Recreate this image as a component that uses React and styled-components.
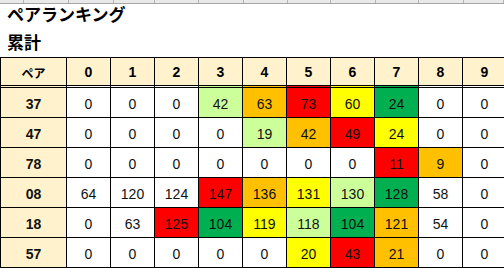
import React from "react";
import styled, { createGlobalStyle } from "styled-components";

const Global = createGlobalStyle`
  html, body { margin: 0; padding: 0; background: #fff; overflow: hidden; }
  body { font-family: "Liberation Sans", Arial, sans-serif; color: #000; }
`;

const Page = styled.div`
  display: flex;
  flex-direction: column;
  width: 504px;
  height: 268px;
  overflow: hidden;
`;

const ColStrip = styled.div`
  display: flex;
  height: 3px;
  background: #e9e9e9;
  border-bottom: 1px solid #a6a6a6;
`;

const StripCell = styled.div`
  flex: 0 0 ${(p) => p.$w}px;
  box-sizing: border-box;
  border-right: 1px solid #b4b4b4;
`;

const Title = styled.div`
  padding-left: 7px;
  font-family: "Noto Sans CJK JP", sans-serif;
  font-weight: 700;
  font-size: 17px;
  line-height: 19px;
  height: 19px;
  white-space: nowrap;
`;

const Sub = styled(Title)`
  margin-top: 9px;
`;

const Grid = styled.div`
  margin-top: 6px;
  display: grid;
  grid-template-columns: 66px repeat(10, 44px);
  width: max-content;
  border-top: 1px solid #000;
  border-left: 1px solid #000;
`;

const Head = styled.div`
  box-sizing: border-box;
  height: 28px;
  background: #fff2cc;
  border-right: 1px solid #000;
  border-bottom: 1px solid #000;
  display: flex;
  align-items: center;
  justify-content: center;
  padding-top: 1px;
  font-weight: 700;
  font-size: ${(p) => (p.$jp ? "12px" : "14px")};
  font-family: ${(p) =>
    p.$jp ? '"Noto Sans CJK JP", sans-serif' : '"Liberation Sans", Arial, sans-serif'};
`;

const Cell = styled.div`
  box-sizing: border-box;
  height: ${(p) => (p.$first ? 32 : 30)}px;
  padding-top: ${(p) => (p.$first ? 6 : 4)}px;
  background: ${(p) => p.$bg};
  border-right: 1px solid #000;
  border-bottom: 1px solid #000;
  box-shadow: ${(p) =>
    p.$first ? `inset 0 1px 0 ${p.$bg}, inset 0 2px 0 #000` : "none"};
  display: flex;
  align-items: center;
  justify-content: center;
  font-family: "Liberation Sans", Arial, sans-serif;
  font-size: 14px;
  font-weight: ${(p) => (p.$bold ? 700 : 400)};
  line-height: 15px;
  color: #111;
`;

const C = {
  w: "#ffffff",
  lg: "#ccff99",
  or: "#ffc000",
  rd: "#ff0000",
  ye: "#ffff00",
  gr: "#00b050",
  pair: "#fff2cc",
};

const rows = [
  ["37", [[0], [0], [0], [42, "lg"], [63, "or"], [73, "rd"], [60, "ye"], [24, "gr"], [0], [0]]],
  ["47", [[0], [0], [0], [0], [19, "lg"], [42, "or"], [49, "rd"], [24, "ye"], [0], [0]]],
  ["78", [[0], [0], [0], [0], [0], [0], [0], [11, "rd"], [9, "or"], [0]]],
  ["08", [[64], [120], [124], [147, "rd"], [136, "or"], [131, "ye"], [130, "lg"], [128, "gr"], [58], [0]]],
  ["18", [[0], [63], [125, "rd"], [104, "gr"], [119, "ye"], [118, "lg"], [104, "gr"], [121, "or"], [54], [0]]],
  ["57", [[0], [0], [0], [0], [0], [20, "ye"], [43, "rd"], [21, "or"], [0], [0]]],
];

const stripWidths = [24, 45, 45, 41, 44, 45, 44, 43, 45, 43, 45, 40];

export default function App() {
  return (
    <>
      <Global />
      <Page>
        <ColStrip>
          {stripWidths.map((w, i) => (
            <StripCell key={i} $w={w} />
          ))}
        </ColStrip>
        <Title>ペアランキング</Title>
        <Sub>累計</Sub>
        <Grid>
          <Head $jp>ペア</Head>
          {Array.from({ length: 10 }, (_, i) => (
            <Head key={i}>{i}</Head>
          ))}
          {rows.map(([pair, vals], ri) => (
            <React.Fragment key={pair}>
              <Cell $bg={C.pair} $bold $first={ri === 0}>
                {pair}
              </Cell>
              {vals.map(([v, c], ci) => (
                <Cell key={ci} $bg={C[c || "w"]} $first={ri === 0}>
                  {v}
                </Cell>
              ))}
            </React.Fragment>
          ))}
        </Grid>
      </Page>
    </>
  );
}
